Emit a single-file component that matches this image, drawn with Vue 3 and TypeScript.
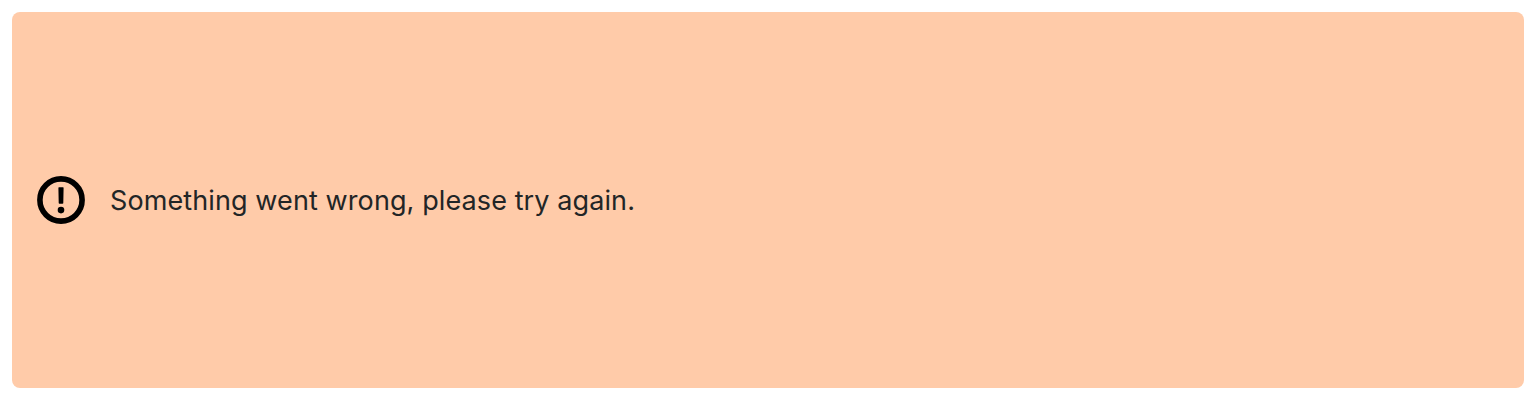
<script setup lang="ts">
const message: string = 'Something went wrong, please try again.'
</script>

<template>
  <main class="page">
    <section class="alert" role="alert">
      <svg class="icon" viewBox="0 0 48 48" aria-hidden="true">
        <circle cx="24" cy="24" r="21.1" fill="none" stroke="#000" stroke-width="5.6" />
        <path d="M22 11.2h4q.6 0 .6.6l-.3 15.1q0 .8-.8.8h-3q-.8 0-.8-.8l-.3-15.1q0-.6.6-.6z" />
        <circle cx="24" cy="34.1" r="3.3" />
      </svg>
      <p class="message">{{ message }}</p>
    </section>
  </main>
</template>

<style>
body {
  background: #fff;
}
</style>

<style scoped>
.page {
  box-sizing: border-box;
  height: 400px;
  padding: 12px;
}
.alert {
  box-sizing: border-box;
  height: 100%;
  display: flex;
  align-items: center;
  gap: 25px;
  padding: 0 25px;
  border-radius: 8px;
  background: #ffcba9;
}
.icon {
  width: 48px;
  height: 48px;
  flex: none;
}
.message {
  margin: 0;
  padding-top: 2px;
  font: 400 27px/40px Inter, sans-serif;
  letter-spacing: 0.1px;
  color: #222526;
}
</style>
